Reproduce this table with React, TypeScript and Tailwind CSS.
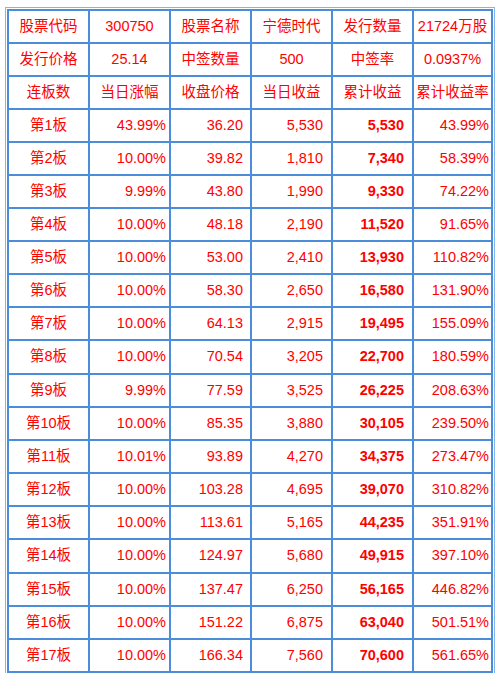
import React from "react";

const head: string[][] = [
  ["股票代码", "300750", "股票名称", "宁德时代", "发行数量", "21724万股"],
  ["发行价格", "25.14", "中签数量", "500", "中签率", "0.0937%"],
  ["连板数", "当日涨幅", "收盘价格", "当日收益", "累计收益", "累计收益率"],
];

const data: string[][] = [
  ["43.99%", "36.20", "5,530", "5,530", "43.99%"],
  ["10.00%", "39.82", "1,810", "7,340", "58.39%"],
  ["9.99%", "43.80", "1,990", "9,330", "74.22%"],
  ["10.00%", "48.18", "2,190", "11,520", "91.65%"],
  ["10.00%", "53.00", "2,410", "13,930", "110.82%"],
  ["10.00%", "58.30", "2,650", "16,580", "131.90%"],
  ["10.00%", "64.13", "2,915", "19,495", "155.09%"],
  ["10.00%", "70.54", "3,205", "22,700", "180.59%"],
  ["9.99%", "77.59", "3,525", "26,225", "208.63%"],
  ["10.00%", "85.35", "3,880", "30,105", "239.50%"],
  ["10.01%", "93.89", "4,270", "34,375", "273.47%"],
  ["10.00%", "103.28", "4,695", "39,070", "310.82%"],
  ["10.00%", "113.61", "5,165", "44,235", "351.91%"],
  ["10.00%", "124.97", "5,680", "49,915", "397.10%"],
  ["10.00%", "137.47", "6,250", "56,165", "446.82%"],
  ["10.00%", "151.22", "6,875", "63,040", "501.51%"],
  ["10.00%", "166.34", "7,560", "70,600", "561.65%"],
];

const tall = new Set([7, 13]);

export default function App() {
  return (
    <div
      className="h-[673px] w-[500px] overflow-hidden bg-white"
      style={{ fontFamily: '"Liberation Sans", Arial, "Noto Sans CJK SC", sans-serif' }}
    >
      <div className="ml-[5px] mt-[7px] w-[490px] border border-[#86b4e8] p-[1px]">
        <div className="grid grid-cols-[79px_79px_79px_79px_79px_77px] gap-[2px] bg-[#4b8dd8] p-[2px] text-[14.5px] text-[#ff0000]">
          {head.map((row, ri) =>
            row.map((c, ci) => (
              <div
                key={`h${ri}-${ci}`}
                className="flex h-[31px] items-center justify-center whitespace-nowrap bg-white"
              >
                {c}
              </div>
            ))
          )}
          {data.map((row, ri) => {
            const h = tall.has(ri) ? "h-[32px]" : "h-[31px]";
            return (
              <React.Fragment key={`r${ri}`}>
                <div className={`flex ${h} items-center justify-center bg-white`}>
                  第{ri + 1}板
                </div>
                <div className={`flex ${h} items-center justify-end bg-white pr-[3px]`}>{row[0]}</div>
                <div className={`flex ${h} items-center justify-end bg-white pr-[7px]`}>{row[1]}</div>
                <div className={`flex ${h} items-center justify-end bg-white pr-[8px]`}>{row[2]}</div>
                <div className={`flex ${h} items-center justify-end bg-white pr-[8px] font-bold`}>{row[3]}</div>
                <div className={`flex ${h} items-center justify-end bg-white pr-[2px]`}>{row[4]}</div>
              </React.Fragment>
            );
          })}
          {[0, 1, 2, 3, 4, 5].map((i) => (
            <div key={`e${i}`} className="h-[31px] bg-white" />
          ))}
        </div>
      </div>
    </div>
  );
}
